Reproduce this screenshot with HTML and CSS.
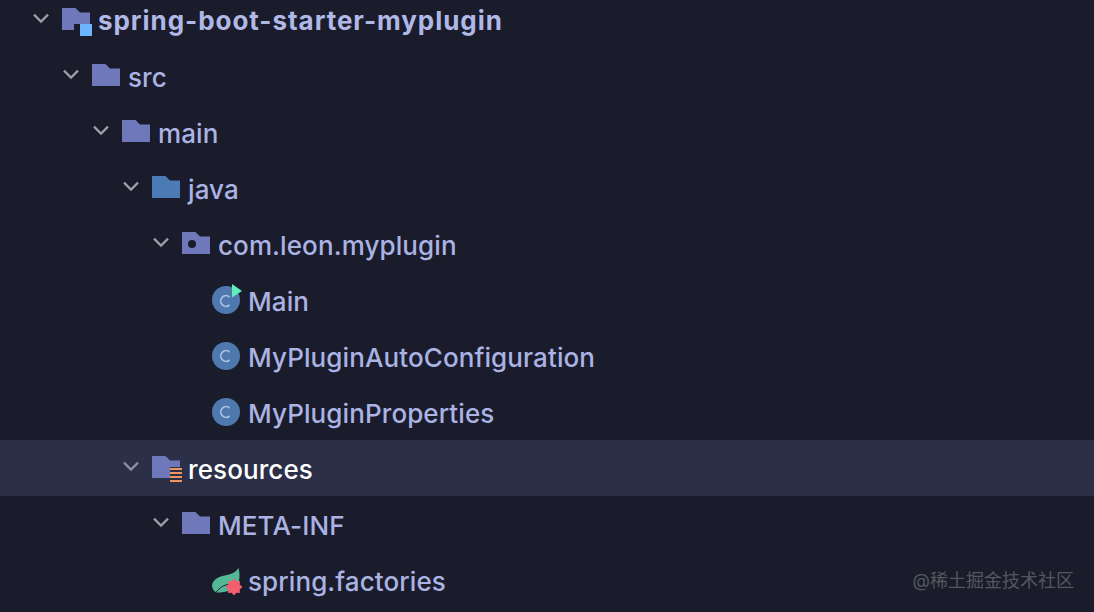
FILE: index.html
```html
<!DOCTYPE html>
<html lang="zh">
<head>
<meta charset="utf-8">
<title>Project tree</title>
<link rel="stylesheet" href="styles.css">
</head>
<body>
<svg class="defs" width="0" height="0" aria-hidden="true">
  <defs>
    <symbol id="chev" viewBox="0 0 16 28"><path d="M1 8.6 L8 15.6 L15 8.6" fill="none" stroke="currentColor" stroke-width="2.2"/></symbol>
    <symbol id="folder" viewBox="0 0 28 28"><path d="M0 2 H13.5 L18 6.5 H28 V24 H0 Z" fill="currentColor"/></symbol>
  </defs>
</svg>
<main class="tree">
  <div class="row d0">
    <svg class="chev"><use href="#chev"/></svg>
    <svg class="ico folder-main" viewBox="0 0 28 28"><path d="M0 2 H13.5 L18 6.5 H28 V24 H18 V18 H12 V24 H0 Z" fill="currentColor"/><rect x="18" y="18" width="12" height="12" fill="#6cb4fb"/></svg>
    <span class="label bold">spring-boot-starter-myplugin</span>
  </div>
  <div class="row d1">
    <svg class="chev"><use href="#chev"/></svg>
    <svg class="ico folder-main"><use href="#folder"/></svg>
    <span class="label">src</span>
  </div>
  <div class="row d2">
    <svg class="chev"><use href="#chev"/></svg>
    <svg class="ico folder-main"><use href="#folder"/></svg>
    <span class="label">main</span>
  </div>
  <div class="row d3">
    <svg class="chev"><use href="#chev"/></svg>
    <svg class="ico folder-blue"><use href="#folder"/></svg>
    <span class="label">java</span>
  </div>
  <div class="row d4">
    <svg class="chev"><use href="#chev"/></svg>
    <svg class="ico folder-main" viewBox="0 0 28 28"><path d="M0 2 H13.5 L18 6.5 H28 V24 H0 Z" fill="currentColor"/><circle cx="10" cy="14" r="4" fill="#1a1c2b"/></svg>
    <span class="label">com.leon.myplugin</span>
  </div>
  <div class="row d5">
    <svg class="ico" viewBox="0 0 28 28"><circle cx="14" cy="14" r="14" fill="#4f79ae"/><path d="M17.5 11 A5.3 5.3 0 1 0 17.5 19" fill="none" stroke="#a9c2e2" stroke-width="1.7"/><path d="M20 -2 L30 5 L20 11.5 Z" fill="#5ef0b8"/></svg>
    <span class="label">Main</span>
  </div>
  <div class="row d5">
    <svg class="ico" viewBox="0 0 28 28"><circle cx="14" cy="14" r="14" fill="#4f79ae"/><path d="M17.5 10 A5.3 5.3 0 1 0 17.5 18" fill="none" stroke="#a9c2e2" stroke-width="1.7"/></svg>
    <span class="label">MyPluginAutoConfiguration</span>
  </div>
  <div class="row d5">
    <svg class="ico" viewBox="0 0 28 28"><circle cx="14" cy="14" r="14" fill="#4f79ae"/><path d="M17.5 10 A5.3 5.3 0 1 0 17.5 18" fill="none" stroke="#a9c2e2" stroke-width="1.7"/></svg>
    <span class="label">MyPluginProperties</span>
  </div>
  <div class="row d3 selected">
    <svg class="chev"><use href="#chev"/></svg>
    <svg class="ico folder-main" viewBox="0 0 28 28"><path d="M0 2 H13.5 L18 6.5 H28 V13 H18 V24 H0 Z" fill="currentColor"/><path d="M18 15 H30 M18 19 H30 M18 23 H30 M18 27 H30" stroke="#f2945f" stroke-width="2.2"/></svg>
    <span class="label">resources</span>
  </div>
  <div class="row d4">
    <svg class="chev"><use href="#chev"/></svg>
    <svg class="ico folder-main"><use href="#folder"/></svg>
    <span class="label">META-INF</span>
  </div>
  <div class="row d5">
    <svg class="ico" viewBox="0 0 28 28"><path d="M0 19 C1.500 12 9 10 15 9 C20 8 24 6 26.500 2 C28 8 28 14 25.500 19 C22 24 12 27 4 26.500 C1.500 25 0 22 0 19 Z" fill="#54b896"/><path d="M4 26.500 C8 21 12 19 18 18" fill="none" stroke="#1a1c2b" stroke-width="1"/><polygon points="22,12.500 24.400,15.300 28,15 27.700,18.600 30.500,21 27.700,23.400 28,27 24.400,26.700 22,29.500 19.600,26.700 16,27 16.300,23.400 13.500,21 16.300,18.600 16,15 19.600,15.300" fill="#f2606f"/></svg>
    <span class="label">spring.factories</span>
  </div>
</main>
<div class="watermark">@稀土掘金技术社区</div>
</body>
</html>
```
FILE: styles.css
```css
html, body {
  margin: 0;
  height: 100%;
}
body {
  position: relative;
  overflow: hidden;
  background: #1a1c2b;
  font-family: Inter, "Noto Sans CJK SC", sans-serif;
}
.defs {
  position: absolute;
}
.tree {
  display: flex;
  flex-direction: column;
  margin-top: -8px;
}
.row {
  display: flex;
  align-items: center;
  height: 56px;
  color: #aab3e3;
  font-size: 26px;
  font-weight: 450;
  letter-spacing: 0.1px;
  white-space: nowrap;
}
.d0 { padding-left: 33px; }
.d1 { padding-left: 63px; }
.d2 { padding-left: 93px; }
.d3 { padding-left: 123px; }
.d4 { padding-left: 153px; }
.d5 { padding-left: 212px; }
.chev {
  flex: none;
  width: 16px;
  height: 28px;
  margin-right: 13px;
  color: #9c9ea8;
}
.ico {
  flex: none;
  width: 28px;
  height: 28px;
  overflow: visible;
  margin-right: 8px;
}
.folder-main { color: #6f78bb; }
.folder-blue { color: #4c7ab5; }
.label {
  padding-top: 2px;
}
.bold {
  padding-top: 0;
  color: #b0b8e6;
  font-weight: 700;
  letter-spacing: 0.95px;
}
.selected {
  background: #2c2f48;
}
.selected .label { color: #fff; }
.selected .chev { color: #8d90a4; }
.watermark {
  position: absolute;
  right: 20px;
  bottom: 20px;
  font-size: 18px;
  line-height: 22px;
  color: #55575f;
}
```
